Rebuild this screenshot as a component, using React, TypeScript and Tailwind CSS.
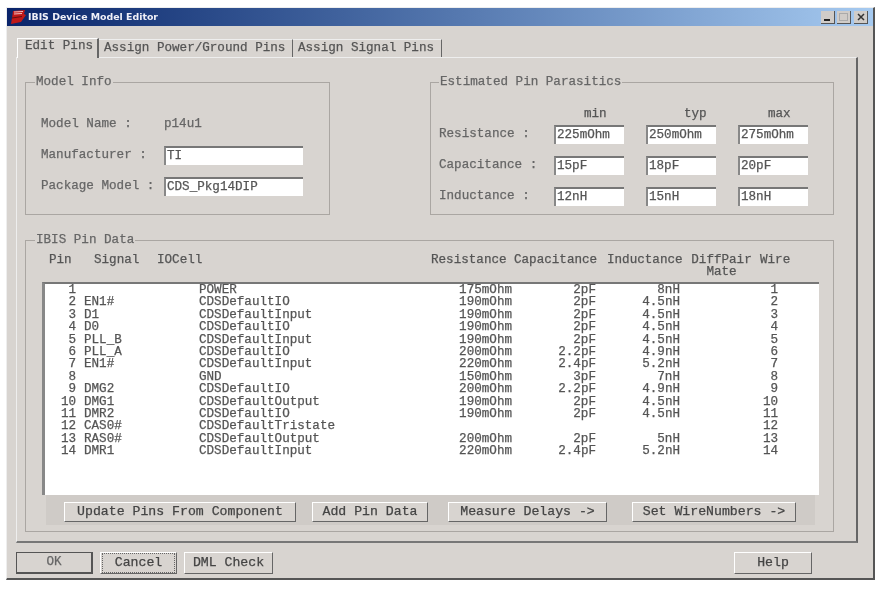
const PINS: Array<[string, string, string, string, string, string, string]> = [
  ['1', '', 'POWER', '175mOhm', '2pF', '8nH', '1'],
  ['2', 'EN1#', 'CDSDefaultIO', '190mOhm', '2pF', '4.5nH', '2'],
  ['3', 'D1', 'CDSDefaultInput', '190mOhm', '2pF', '4.5nH', '3'],
  ['4', 'D0', 'CDSDefaultIO', '190mOhm', '2pF', '4.5nH', '4'],
  ['5', 'PLL_B', 'CDSDefaultInput', '190mOhm', '2pF', '4.5nH', '5'],
  ['6', 'PLL_A', 'CDSDefaultIO', '200mOhm', '2.2pF', '4.9nH', '6'],
  ['7', 'EN1#', 'CDSDefaultInput', '220mOhm', '2.4pF', '5.2nH', '7'],
  ['8', '', 'GND', '150mOhm', '3pF', '7nH', '8'],
  ['9', 'DMG2', 'CDSDefaultIO', '200mOhm', '2.2pF', '4.9nH', '9'],
  ['10', 'DMG1', 'CDSDefaultOutput', '190mOhm', '2pF', '4.5nH', '10'],
  ['11', 'DMR2', 'CDSDefaultIO', '190mOhm', '2pF', '4.5nH', '11'],
  ['12', 'CAS0#', 'CDSDefaultTristate', '', '', '', '12'],
  ['13', 'RAS0#', 'CDSDefaultOutput', '200mOhm', '2pF', '5nH', '13'],
  ['14', 'DMR1', 'CDSDefaultInput', '220mOhm', '2.4pF', '5.2nH', '14'],
];

const PARASITICS = [
  { label: 'Resistance :', values: ['225mOhm', '250mOhm', '275mOhm'] },
  { label: 'Capacitance :', values: ['15pF', '18pF', '20pF'] },
  { label: 'Inductance :', values: ['12nH', '15nH', '18nH'] },
];

function Field({ value, width }: { value: string; width: string }) {
  return (
    <div
      className={`${width} h-[19px] bg-white border-t-2 border-l-2 border-t-[#777] border-l-[#888] pl-[1px] leading-[16px] text-[#555]`}
    >
      {value}
    </div>
  );
}

function Btn({ label, width, dotted }: { label: string; width: string; dotted?: boolean }) {
  return (
    <div
      className={`${width} h-[20px] flex items-center justify-center bg-[#d8d4d0] border border-t-white border-l-white border-r-[#666] border-b-[#666] text-[13.2px] text-[#444] leading-none`}
    >
      {dotted ? (
        <span className="w-full h-full mx-[1px] my-[1px] flex items-center justify-center border border-dotted border-[#666]">
          {label}
        </span>
      ) : (
        label
      )}
    </div>
  );
}

function Group({ title, className, legendClass, children }: { title: string; className: string; legendClass: string; children: React.ReactNode }) {
  return (
    <fieldset className={`border border-[#aaa6a2] ${className}`}>
      <legend className={`${legendClass} px-[1px] leading-[14px] text-[#666]`}>{title}</legend>
      {children}
    </fieldset>
  );
}

export default function App() {
  return (
    <div className="w-[886px] h-[590px] bg-white pl-[6px] pt-[7px] overflow-hidden">
      <div className="w-[869px] h-[573px] flex flex-col bg-[#d8d4d0] border-r-2 border-b-2 border-r-[#555] border-b-[#555] border-t border-l border-t-[#eee] border-l-[#eee] blur-[0.4px] text-[12.6px] [-webkit-text-stroke:0.25px] [font-family:'Liberation_Mono',monospace] text-[#666]">
        {/* title bar */}
        <div className="h-[18px] shrink-0 flex items-center pl-[3px] pr-[5px] bg-gradient-to-r from-[#0a246a] to-[#a6caf0]">
          <svg width="17" height="16" viewBox="0 0 17 16" aria-hidden="true">
            <path d="M3 2 L15 1 L14 5 L16 6 L11 13 L1 15 L2 9 Z" fill="#c01818" />
            <path d="M4 3 L13 2.5 M4 5 L12 4.5" stroke="#f0c0c0" strokeWidth="1" />
            <path d="M2 9 L12 7.5" stroke="#601010" strokeWidth="1" />
          </svg>
          <span className="ml-[1px] text-[9.4px] leading-none font-bold text-[#f0f0f8] [-webkit-text-stroke:0] [font-family:'DejaVu_Sans',sans-serif]">
            IBIS Device Model Editor
          </span>
          <div className="ml-auto flex gap-[2px]">
            <div className="w-[14px] h-[13px] bg-[#d0ccc8] border-b border-r border-[#555] flex items-end pl-[3px] pb-[2px]">
              <div className="w-[6px] h-[2px] bg-[#222]" />
            </div>
            <div className="w-[14px] h-[13px] bg-[#d0ccc8] border-b border-r border-[#555] flex items-center justify-center">
              <div className="w-[9px] h-[8px] border border-[#aaa]" />
            </div>
            <div className="w-[14px] h-[13px] ml-[1px] bg-[#d0ccc8] border-b border-r border-[#555] flex items-center justify-center">
              <svg width="8" height="8" viewBox="0 0 8 8" aria-hidden="true">
                <path d="M1 1 L7 7 M7 1 L1 7" stroke="#333" strokeWidth="1.5" />
              </svg>
            </div>
          </div>
        </div>

        {/* tabs */}
        <div className="h-[31px] shrink-0 flex items-end pl-[10px] text-[#555]">
          <div className="h-[20px] w-[82px] -mb-[1px] z-10 pl-[7px] bg-[#d8d4d0] border-t border-l border-dotted border-white border-r-2 border-r-[#666] border-solid leading-[15px]">
            Edit Pins
          </div>
          <div className="h-[18px] w-[194px] pl-[5px] border-r border-r-[#666] border-t border-t-[#eee] leading-[16px] whitespace-nowrap">
            Assign Power/Ground Pins
          </div>
          <div className="h-[18px] w-[149px] pl-[5px] border-r border-r-[#666] border-t border-t-[#eee] leading-[16px] whitespace-nowrap">
            Assign Signal Pins
          </div>
        </div>

        {/* tab panel */}
        <div className="w-[842px] h-[486px] ml-[9px] shrink-0 pl-[8px] pt-[17px] border-t border-l border-[#eee] border-r-2 border-b-2 border-r-[#666] border-b-[#777]">
          <div className="flex">
            <Group title="Model Info" legendClass="ml-[9px]" className="w-[305px] h-[140px]">
              <div className="pl-[15px] pt-[26px]">
                <div className="flex items-center h-[19px]">
                  <span className="w-[123px]">Model Name :</span>
                  <span>p14u1</span>
                </div>
                <div className="flex items-center mt-[12px]">
                  <span className="w-[123px] whitespace-nowrap">Manufacturer :</span>
                  <Field value="TI" width="w-[139px]" />
                </div>
                <div className="flex items-center mt-[12px]">
                  <span className="w-[123px] whitespace-nowrap">Package Model :</span>
                  <Field value="CDS_Pkg14DIP" width="w-[139px]" />
                </div>
              </div>
            </Group>
            <Group title="Estimated Pin Parasitics" legendClass="ml-[8px]" className="w-[404px] h-[140px] ml-[100px]">
              <div className="pl-[8px] pt-[18px]">
                <div className="flex h-[14px] pl-[115px] leading-[14px] text-[#555]">
                  <span className="w-[92px] pl-[30px]">min</span>
                  <span className="w-[92px] pl-[38px]">typ</span>
                  <span className="w-[92px] pl-[30px]">max</span>
                </div>
                <div className="flex flex-col gap-[12px] mt-[4px]">
                  {PARASITICS.map((row) => (
                    <div key={row.label} className="flex items-center">
                      <span className="w-[115px] whitespace-nowrap">{row.label}</span>
                      <div className="flex gap-[22px]">
                        {row.values.map((v) => (
                          <Field key={v} value={v} width="w-[70px]" />
                        ))}
                      </div>
                    </div>
                  ))}
                </div>
              </div>
            </Group>
          </div>

          <Group title="IBIS Pin Data" legendClass="ml-[9px]" className="w-[809px] h-[299px] mt-[18px]">
            <div className="pl-[16px]">
              <div className="h-[35px] text-[#555] leading-[12.4px] pt-[7px]">
                <div className="grid grid-cols-[52px_63px_274px_83px_93px_84px_69px_auto] whitespace-nowrap">
                  <span className="pl-[7px]">Pin</span>
                  <span>Signal</span>
                  <span>IOCell</span>
                  <span>Resistance</span>
                  <span>Capacitance</span>
                  <span>Inductance</span>
                  <div className="w-[61px] text-center">
                    <div className="h-[12.4px]">DiffPair</div>
                    <div className="h-[12.4px]">Mate</div>
                  </div>
                  <span>Wire</span>
                </div>
              </div>
              <div className="w-[777px] h-[213px] bg-white border-t-2 border-l-[3px] border-t-[#777] border-l-[#888] text-[#555] leading-[12.4px]">
                {PINS.map((p) => (
                  <div
                    key={p[0]}
                    className="grid grid-cols-[31px_123px_229px_84px_84px_84px_98px] whitespace-pre h-[12.4px]"
                  >
                    <span className="text-right">{p[0]}</span>
                    <span className="pl-[8px]">{p[1]}</span>
                    <span>{p[2]}</span>
                    <span className="text-right">{p[3]}</span>
                    <span className="text-right">{p[4]}</span>
                    <span className="text-right">{p[5]}</span>
                    <span className="text-right">{p[6]}</span>
                  </div>
                ))}
              </div>
              <div className="w-[769px] ml-[4px] h-[30px] bg-[#cfcbc7] pt-[7px] pl-[18px] flex text-[#333]">
                <Btn label="Update Pins From Component" width="w-[232px]" />
                <Btn label="Add Pin Data" width="w-[116px] ml-[16px]" />
                <Btn label="Measure Delays ->" width="w-[159px] ml-[20px]" />
                <Btn label="Set WireNumbers ->" width="w-[164px] ml-[25px]" />
              </div>
            </div>
          </Group>
        </div>

        {/* dialog buttons */}
        <div className="flex items-start pl-[9px] pt-[9px]">
          <div className="w-[77px] h-[22px] flex items-center justify-center border-2 border-t border-l border-[#555] text-[#666] leading-none">
            OK
          </div>
          <div className="ml-[7px]">
            <Btn label="Cancel" width="w-[77px] h-[22px]" dotted />
          </div>
          <div className="ml-[7px]">
            <Btn label="DML Check" width="w-[89px] h-[22px]" />
          </div>
          <div className="ml-[461px]">
            <Btn label="Help" width="w-[78px] h-[22px]" />
          </div>
        </div>
      </div>
    </div>
  );
}
